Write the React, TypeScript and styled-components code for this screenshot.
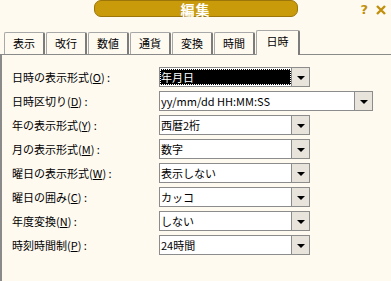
import React from "react"
import styled, { createGlobalStyle } from "styled-components"

const GlobalStyle = createGlobalStyle`
  html, body {
    margin: 0;
    padding: 0;
    background: #fefaf0;
  }
  body {
    font-family: "Noto Sans CJK JP", "Liberation Sans", sans-serif;
    color: #000;
  }
`

const Window = styled.div`
  width: 391px;
  height: 281px;
  background: #fefaf0;
  display: flex;
  flex-direction: column;
  overflow: hidden;
`

const Header = styled.div`
  height: 17px;
  display: grid;
  grid-template-columns: 1fr 204px 1fr;
  align-items: start;
`

const TitlePill = styled.div`
  grid-column: 2;
  height: 17px;
  box-sizing: border-box;
  background: #c99a0a;
  border: 1px solid #9c7608;
  border-radius: 7px;
  display: flex;
  align-items: center;
  justify-content: center;
  overflow: visible;
`

const TitleText = styled.span`
  color: #fff;
  font-size: 14px;
  font-weight: bold;
  line-height: 14px;
  letter-spacing: 1px;
`

const HeaderIcons = styled.div`
  grid-column: 3;
  display: flex;
  justify-content: flex-end;
  align-items: center;
  gap: 8px;
  padding: 4px 5px 0 0;
`

const HelpMark = styled.span`
  color: #c0900c;
  font-family: "DejaVu Sans", sans-serif;
  font-weight: bold;
  font-size: 13px;
  line-height: 12px;
`

const TabRow = styled.div`
  display: flex;
  align-items: flex-end;
  margin-top: 12px;
  padding-left: 4px;
  height: 25px;
  border-bottom: 1px solid #8a8a8a;
`

const Tab = styled.div<{ $active?: boolean }>`
  width: ${({ $active }) => ($active ? 44 : 41)}px;
  height: ${({ $active }) => ($active ? 25 : 22)}px;
  box-sizing: border-box;
  margin-right: ${({ $active }) => ($active ? 0 : 1)}px;
  margin-bottom: ${({ $active }) => ($active ? -1 : 0)}px;
  background: #fefaf0;
  border-top: 1px solid #a8a8a8;
  border-left: 1px solid #a8a8a8;
  border-right: 2px solid #7c7c7c;
  border-radius: 2px 2px 0 0;
  font-size: 11px;
  line-height: 20px;
  text-align: center;
`

const Panel = styled.div`
  flex: 1;
  border-left: 2px solid #8a8a8a;
  padding: 12px 0 0 10px;
  display: flex;
  flex-direction: column;
  gap: 4px;
`

const Row = styled.div`
  display: flex;
  align-items: center;
  height: 20px;
`

const Label = styled.div`
  width: 147px;
  font-size: 11px;
  white-space: nowrap;
`

const Select = styled.div<{ $wide?: boolean }>`
  width: ${({ $wide }) => ($wide ? 214 : 151)}px;
  height: 20px;
  box-sizing: border-box;
  border: 1px solid #8c8c8c;
  background: #fff;
  display: flex;
`

const Value = styled.div<{ $focused?: boolean }>`
  flex: 1;
  font-size: 11px;
  line-height: 16px;
  padding-left: 1px;
  margin: 1px 0;
  white-space: nowrap;
  overflow: hidden;
  box-sizing: border-box;
  background: ${({ $focused }) => ($focused ? "#000" : "transparent")};
  color: ${({ $focused }) => ($focused ? "#fff" : "#000")};
  outline: ${({ $focused }) => ($focused ? "1px dotted #fff" : "none")};
  outline-offset: -1px;
`

const DropButton = styled.div`
  width: 17px;
  border-left: 1px solid #8c8c8c;
  background: #e8e4dc;
  display: flex;
  align-items: center;
  justify-content: center;
`

const Arrow = styled.div`
  width: 0;
  height: 0;
  border-left: 4px solid transparent;
  border-right: 4px solid transparent;
  border-top: 4px solid #000;
  margin-top: 1px;
`

const tabs = ["表示", "改行", "数値", "通貨", "変換", "時間", "日時"]

const rows = [
  { label: "日時の表示形式", key: "O", value: "年月日", focused: true },
  { label: "日時区切り", key: "D", value: "yy/mm/dd HH:MM:SS", wide: true },
  { label: "年の表示形式", key: "Y", value: "西暦2桁" },
  { label: "月の表示形式", key: "M", value: "数字" },
  { label: "曜日の表示形式", key: "W", value: "表示しない" },
  { label: "曜日の囲み", key: "C", value: "カッコ" },
  { label: "年度変換", key: "N", value: "しない" },
  { label: "時刻時間制", key: "P", value: "24時間" },
]

export default function App() {
  return (
    <Window>
      <GlobalStyle />
      <Header>
        <TitlePill>
          <TitleText>編集</TitleText>
        </TitlePill>
        <HeaderIcons>
          <HelpMark>?</HelpMark>
          <svg width="10" height="10" viewBox="0 0 10 10">
            <path d="M1 1 L9 9 M9 1 L1 9" stroke="#c0900c" strokeWidth="2.4" />
          </svg>
        </HeaderIcons>
      </Header>
      <TabRow>
        {tabs.map((t) => (
          <Tab key={t} $active={t === "日時"}>
            {t}
          </Tab>
        ))}
      </TabRow>
      <Panel>
        {rows.map((r) => (
          <Row key={r.key}>
            <Label>
              {r.label}(<u>{r.key}</u>) :
            </Label>
            <Select $wide={r.wide}>
              <Value $focused={r.focused}>{r.value}</Value>
              <DropButton>
                <Arrow />
              </DropButton>
            </Select>
          </Row>
        ))}
      </Panel>
    </Window>
  )
}
